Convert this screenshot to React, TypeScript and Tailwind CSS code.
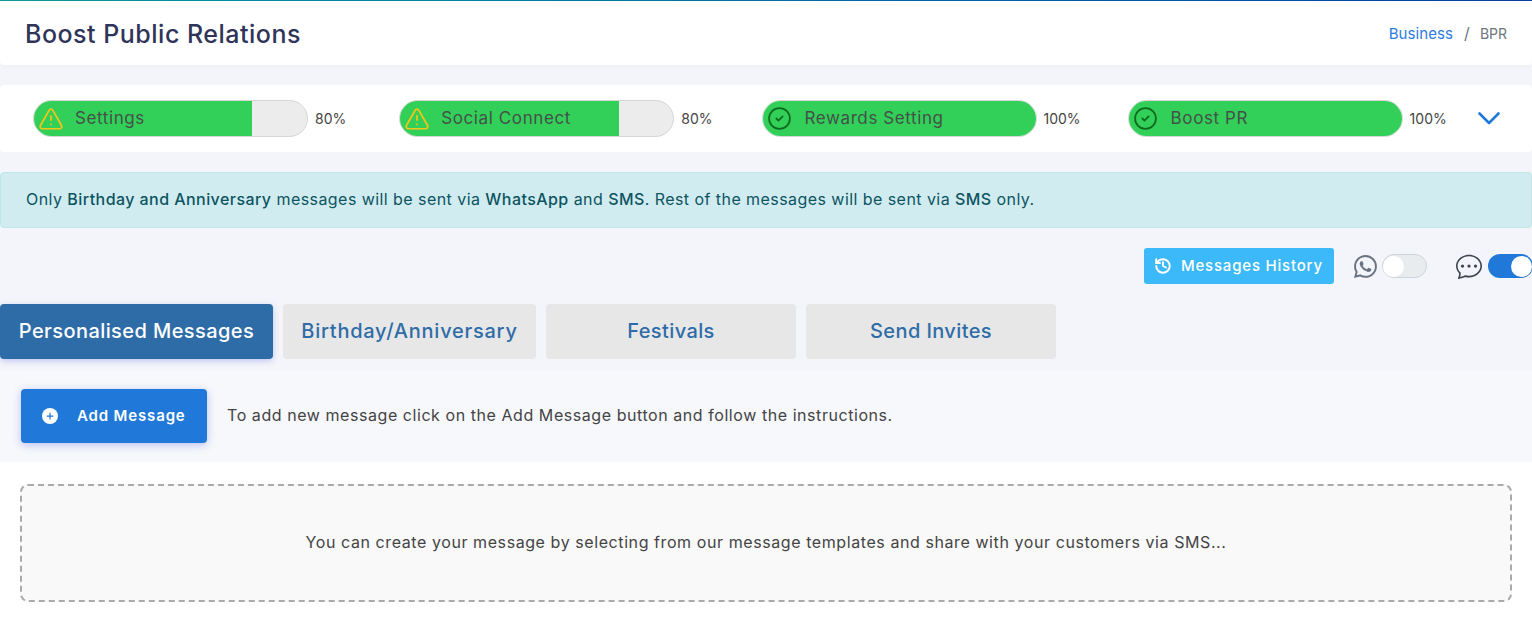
import { CircleCheck, History, Plus, TriangleAlert } from 'lucide-react'
import { BsChatDots, BsWhatsapp } from 'react-icons/bs'

const steps = [
  { label: 'Settings', percent: 80, gap: 'mr-[53px]', done: false },
  { label: 'Social Connect', percent: 80, gap: 'mr-[49px]', done: false },
  { label: 'Rewards Setting', percent: 100, gap: 'mr-[47px]', done: true },
  { label: 'Boost PR', percent: 100, gap: 'mr-[31px]', done: true },
]

const tabs = [
  { label: 'Birthday/Anniversary', className: 'w-[253px] tracking-[0.75px]' },
  { label: 'Festivals', className: 'w-[250px] tracking-[0.4px]' },
  { label: 'Send Invites', className: 'w-[250px] tracking-[0.4px]' },
]

function Toggle({ on }: { on: boolean }) {
  return (
    <span
      className={
        on
          ? 'flex h-6 w-[45px] shrink-0 items-center justify-end rounded-full bg-[#2079d8] pr-px'
          : 'flex h-6 w-[45px] shrink-0 items-center rounded-full border border-[#ced4da] bg-[#e9ecef]'
      }
    >
      <span className="h-[21px] w-[21px] rounded-full bg-white" />
    </span>
  )
}

export default function App() {
  return (
    <div className="h-[638px] w-[1532px] overflow-hidden bg-white font-['Inter',sans-serif] text-[#444]">
      <div className="h-[462px] bg-[#f4f5fa]">
        <div className="h-px bg-gradient-to-r from-[#0f9c9c] to-[#0a3fa8]" />
        <header className="flex h-[64px] items-center justify-between rounded-b bg-white pl-[25px] pr-[25px] shadow-[0_1px_5px_rgba(0,0,0,0.03)]">
          <h1 className="pt-[3px] text-[25px] font-medium tracking-[0.5px] text-[#2f3559]">Boost Public Relations</h1>
          <div className="flex items-center text-[#6c757d]">
            <span className="pt-[2px] text-[15px] tracking-[0.1px] text-[#2c7be5]">Business</span>
            <span className="ml-[11px] mr-[10px] text-[16px]">/</span>
            <span className="text-[14px]">BPR</span>
          </div>
        </header>

        <section className="mt-5 flex h-[67px] items-center rounded bg-white pl-[33px]">
          {steps.map((step) => (
            <div key={step.label} className={`flex items-center ${step.gap}`}>
              <div className="relative h-[37px] w-[275px] overflow-hidden rounded-full border border-[#d6d6d6] bg-[#ececec]">
                <div className="h-full bg-[#32d058]" style={{ width: `${step.percent}%` }} />
                <div className="absolute inset-0 flex items-center pl-[4px] text-[17px] tracking-[0.6px] text-[#44504a]">
                  {step.done ? (
                    <CircleCheck size={25} strokeWidth={1.7} className="text-[#0e6b1c]" />
                  ) : (
                    <TriangleAlert size={26} strokeWidth={1.6} className="text-[#f5c518]" />
                  )}
                  <span className={step.done ? 'ml-[13px]' : 'ml-[11px]'}>{step.label}</span>
                </div>
              </div>
              <span className="ml-[7px] text-[14px] text-[#444]">{step.percent}%</span>
            </div>
          ))}
          <svg width="22" height="13" viewBox="0 0 22 13" fill="none" className="text-[#2079d8]">
            <polyline points="1.5,1.5 11,11 20.5,1.5" stroke="currentColor" strokeWidth="2.6" strokeLinecap="round" strokeLinejoin="round" />
          </svg>
        </section>

        <div className="mt-5 flex h-14 items-center rounded border border-[#bee5eb] bg-[#d1ecf1] pb-[2px] pl-[25px] text-[16px] tracking-[0.44px] text-[#0c5460]">
          <p>
            Only <b className="font-medium">Birthday and Anniversary</b> messages will be sent via{' '}
            <b className="font-medium">WhatsApp</b> and <b className="font-medium">SMS</b>. Rest of the messages will be
            sent via <b className="font-medium">SMS</b> only.
          </p>
        </div>

        <div className="mt-5 -mr-px flex h-9 items-center justify-end">
          <button className="flex h-9 w-[190px] items-center gap-[9px] rounded-[3px] bg-[#3bb9f8] pl-[10px] text-[15px] font-medium tracking-[0.8px] text-white">
            <History size={18} strokeWidth={2.6} />
            Messages History
          </button>
          <BsWhatsapp size={23} className="ml-[20px] mr-[5px] text-[#6b7280]" />
          <Toggle on={false} />
          <BsChatDots size={26} className="ml-[29px] mr-[6px] text-[#3f4450]" />
          <Toggle on />
        </div>

        <nav className="mt-5 flex h-[55px] gap-[10px]">
          <button className="w-[273px] rounded bg-[#2e6ca8] pb-px text-[20px] font-medium tracking-[0.42px] text-white shadow-[0_2px_6px_rgba(70,90,230,0.3)]">
            Personalised Messages
          </button>
          {tabs.map((tab) => (
            <button
              key={tab.label}
              className={`${tab.className} rounded bg-[#e7e7e7] pb-px text-[20px] font-medium text-[#2e6ca8]`}
            >
              {tab.label}
            </button>
          ))}
        </nav>

        <div className="mt-[11px] flex h-[92px] items-center rounded-tl bg-[#f7f8fb] pl-[21px]">
          <button className="flex h-[54px] w-[186px] items-center rounded bg-[#2079d8] pl-[21px] text-[15px] font-semibold tracking-[0.85px] text-white shadow-[0_2px_8px_rgba(70,90,230,0.35)]">
            <span className="mr-[19px] flex h-4 w-4 items-center justify-center rounded-full bg-white text-[#2079d8]">
              <Plus size={10} strokeWidth={3} />
            </span>
            Add Message
          </button>
          <p className="ml-5 pb-[2px] text-[16px] tracking-[0.56px] text-[#444]">
            To add new message click on the Add Message button and follow the instructions.
          </p>
        </div>
      </div>

      <div className="mx-5 mt-[22px] flex h-[118px] items-center justify-center rounded-lg border-2 border-dashed border-[#aaa] bg-[#f9f9f9] pb-[2px] text-[16px] tracking-[0.58px] text-[#444]">
        You can create your message by selecting from our message templates and share with your customers via SMS...
      </div>
    </div>
  )
}
